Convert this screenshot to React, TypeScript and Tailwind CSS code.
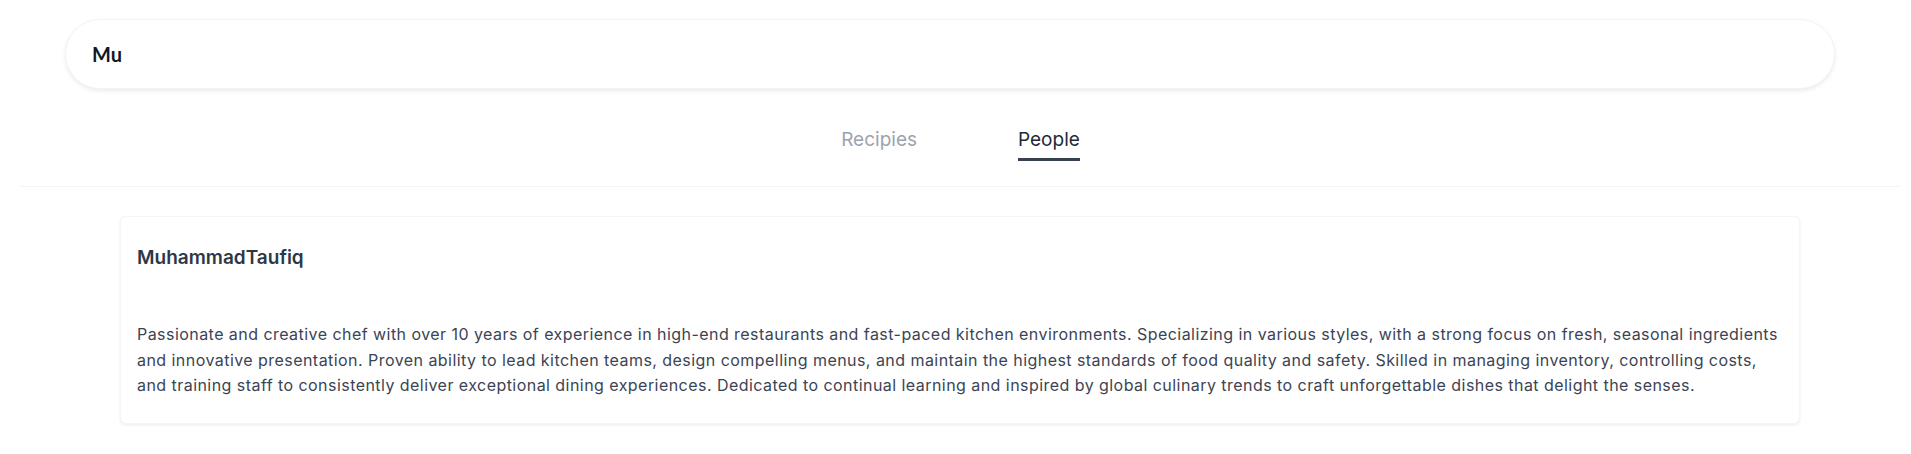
import React, { useState } from 'react';

const bio =
  'Passionate and creative chef with over 10 years of experience in high-end restaurants and fast-paced kitchen environments. Specializing in various styles, with a strong focus on fresh, seasonal ingredients and innovative presentation. Proven ability to lead kitchen teams, design compelling menus, and maintain the highest standards of food quality and safety. Skilled in managing inventory, controlling costs, and training staff to consistently deliver exceptional dining experiences. Dedicated to continual learning and inspired by global culinary trends to craft unforgettable dishes that delight the senses.';

const App: React.FC = () => {
  const [query, setQuery] = useState('Mu');
  const [tab, setTab] = useState<'recipes' | 'people'>('people');

  const tabs = [
    { key: 'recipes' as const, label: 'Recipies' },
    { key: 'people' as const, label: 'People' },
  ];

  return (
    <div className="min-h-screen bg-white font-['Inter',sans-serif]">
      {/* Search */}
      <div className="pt-[19px] pl-[65px] pr-[76px]">
        <div className="h-[70px] rounded-full bg-white border border-[#f3f4f6] shadow-[0_2px_4px_rgba(0,0,0,0.08)] flex items-center px-[26px]">
          <input
            value={query}
            onChange={(e) => setQuery(e.target.value)}
            className="w-full bg-transparent outline-none text-[20px] font-bold text-[#111827] font-['Lato',sans-serif]"
          />
        </div>
      </div>

      {/* Tabs */}
      <div className="mt-[37px] flex justify-center gap-[101px] pl-[10px]">
        {tabs.map((t) => (
          <button
            key={t.key}
            onClick={() => setTab(t.key)}
            className={`text-[19px] leading-[28px] pb-[4px] border-b-[3px] ${
              tab === t.key ? 'text-[#1f2937] border-[#374151]' : 'text-[#9ca3af] border-transparent'
            }`}
          >
            {t.label}
          </button>
        ))}
      </div>
      <div className="mt-[25px] ml-[20px] mr-[11px] h-px bg-[#f3f4f6]" />

      {/* Results */}
      <div className="mt-[29px] ml-[120px] mr-[111px] pb-[31px]">
        {tab === 'people' && (
          <div className="rounded-md bg-white border border-[#f5f5f5] shadow-[0_1px_3px_rgba(0,0,0,0.08)] px-4 pt-[27px] pb-[24px]">
            <h3 className="text-[19px] leading-[28px] font-semibold text-[#2d3748]">MuhammadTaufiq</h3>
            <p className="mt-[50px] text-[16px] leading-[25.5px] tracking-[0.45px] text-[#3b4454]">{bio}</p>
          </div>
        )}
      </div>
    </div>
  );
};

export default App;
